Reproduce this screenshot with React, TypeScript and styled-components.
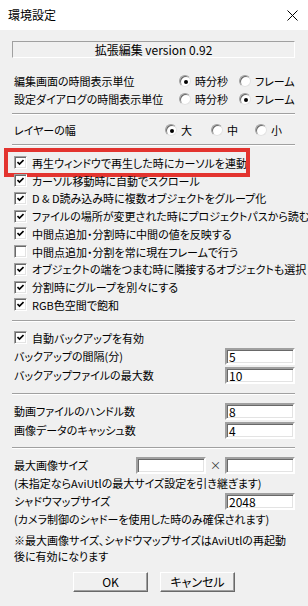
import React from "react";
import styled, { createGlobalStyle } from "styled-components";

const GlobalStyle = createGlobalStyle`
  html, body {
    margin: 0;
    padding: 0;
    background: #f0f0f0;
  }
  body {
    font-family: "Noto Sans CJK JP", "Noto Sans", sans-serif;
    font-size: 11px;
    color: #000;
    font-feature-settings: "palt";
  }
`;

const Window = styled.div`
  width: 308px;
  height: 606px;
  background: #f0f0f0;
  display: flex;
  flex-direction: column;
  overflow: hidden;
`;

const TitleBar = styled.div`
  height: 30px;
  background: #fff;
  display: flex;
  align-items: center;
  justify-content: space-between;
  padding: 0 10px 0 8px;
  flex-shrink: 0;
`;

const Title = styled.span`
  font-size: 12px;
  line-height: 30px;
`;

const Content = styled.div`
  padding: 0 13px 0 12px;
  display: flex;
  flex-direction: column;
`;

const VersionBox = styled.div`
  margin-top: 11px;
  height: 15px;
  border: 1px solid;
  border-color: #a0a0a0 #fff #fff #a0a0a0;
  display: flex;
  align-items: center;
  justify-content: center;
  font-size: 12px;
  line-height: 15px;
`;

const Separator = styled.div<{ $mt: number }>`
  margin-top: ${(p) => p.$mt}px;
  height: 0;
  border-top: 1px solid #a0a0a0;
  border-bottom: 1px solid #fff;
`;

const Row = styled.div<{ $h: number; $mt?: number }>`
  height: ${(p) => p.$h}px;
  margin-top: ${(p) => p.$mt ?? 0}px;
  display: flex;
  align-items: center;
  white-space: nowrap;
`;

const Label = styled.span<{ $w?: number }>`
  width: ${(p) => (p.$w ? `${p.$w}px` : "auto")};
  flex: ${(p) => (p.$w ? "none" : "1")};
  line-height: 14px;
  padding-left: 2px;
`;

const RadioItem = styled.label<{ $w?: number }>`
  width: ${(p) => (p.$w ? `${p.$w}px` : "auto")};
  display: flex;
  align-items: center;
  gap: 4px;
`;

const RadioCircle = styled.span<{ $on?: boolean }>`
  width: 10px;
  height: 10px;
  border-radius: 50%;
  background: #fff;
  border: 1px solid;
  border-color: #a0a0a0 #e3e3e3 #e3e3e3 #a0a0a0;
  box-shadow: inset 1px 1px 0 #696969;
  display: flex;
  align-items: center;
  justify-content: center;
  flex: none;

  &::after {
    content: "";
    width: 4px;
    height: 4px;
    border-radius: 50%;
    background: ${(p) => (p.$on ? "#000" : "transparent")};
    margin: 1px 0 0 1px;
  }
`;

const CheckList = styled.div<{ $mt: number }>`
  margin-top: ${(p) => p.$mt}px;
  display: flex;
  flex-direction: column;
`;

const CheckRow = styled.label<{ $h?: number }>`
  position: relative;
  height: ${(p) => p.$h ?? 17.75}px;
  display: flex;
  align-items: center;
  gap: 5px;
  padding-left: 2px;
  white-space: nowrap;
`;

const CheckBox = styled.span`
  width: 11px;
  height: 11px;
  background: #fff;
  border: 1px solid;
  border-color: #a0a0a0 #fff #fff #a0a0a0;
  box-shadow: inset 1px 1px 0 #696969, inset -1px -1px 0 #e3e3e3;
  display: flex;
  align-items: center;
  justify-content: center;
  flex: none;
`;

const Highlight = styled.span`
  position: absolute;
  left: -8px;
  top: -6px;
  width: 238px;
  height: 21px;
  border: 4px solid #e3342f;
  pointer-events: none;
`;

const TextBox = styled.div<{ $w?: number }>`
  width: ${(p) => p.$w ?? 64}px;
  height: 13px;
  background: #fff;
  border: 2px solid;
  border-color: #a0a0a0 #fff #fff #a0a0a0;
  box-shadow: inset 1px 1px 0 #696969, inset -1px -1px 0 #e3e3e3;
  padding-left: 2px;
  display: flex;
  align-items: center;
  font-size: 12px;
  line-height: 13px;
  flex: none;
`;

const Times = styled.span`
  width: 19px;
  text-align: center;
  color: #333;
`;

const Note = styled.div<{ $lh: number; $mt?: number }>`
  margin-top: ${(p) => p.$mt ?? 0}px;
  height: ${(p) => p.$lh}px;
  line-height: ${(p) => p.$lh}px;
  padding-left: 2px;
  white-space: nowrap;
`;

const ButtonBar = styled.div`
  margin-top: 8px;
  display: flex;
  gap: 12px;
  padding-left: 61px;
`;

const Button = styled.button`
  width: 75px;
  height: 20px;
  background: #f0f0f0;
  border: 1px solid;
  border-color: #fff #696969 #696969 #fff;
  box-shadow: inset -1px -1px 0 #a0a0a0;
  font-family: inherit;
  font-size: 12px;
  color: #000;
  padding: 0;
  font-feature-settings: "palt";
`;

function CloseIcon() {
  return (
    <svg width="11" height="11" viewBox="0 0 11 11">
      <path d="M0.5 0.5 L10.5 10.5 M10.5 0.5 L0.5 10.5" stroke="#000" strokeWidth="1" fill="none" />
    </svg>
  );
}

function CheckMark() {
  return (
    <svg width="7" height="7" viewBox="0 0 7 7">
      <path d="M0.5 3 L2.5 5 L6.5 1" stroke="#000" strokeWidth="1.6" fill="none" />
    </svg>
  );
}

function Radio({ on, label, w }: { on?: boolean; label: string; w?: number }) {
  return (
    <RadioItem $w={w}>
      <RadioCircle $on={on} />
      <span>{label}</span>
    </RadioItem>
  );
}

function Check({ on, label, highlight, h }: { on: boolean; label: string; highlight?: boolean; h?: number }) {
  return (
    <CheckRow $h={h}>
      <CheckBox>{on && <CheckMark />}</CheckBox>
      <span>{label}</span>
      {highlight && <Highlight />}
    </CheckRow>
  );
}

const checks: { on: boolean; label: string }[] = [
  { on: true, label: "カーソル移動時に自動でスクロール" },
  { on: true, label: "D & D読み込み時に複数オブジェクトをグループ化" },
  { on: true, label: "ファイルの場所が変更された時にプロジェクトパスから読む" },
  { on: true, label: "中間点追加・分割時に中間の値を反映する" },
  { on: false, label: "中間点追加・分割を常に現在フレームで行う" },
  { on: true, label: "オブジェクトの端をつまむ時に隣接するオブジェクトも選択" },
  { on: true, label: "分割時にグループを別々にする" },
  { on: true, label: "RGB色空間で飽和" },
];

export default function App() {
  return (
    <Window>
      <GlobalStyle />
      <TitleBar>
        <Title>環境設定</Title>
        <CloseIcon />
      </TitleBar>
      <Content>
        <VersionBox>拡張編集 version 0.92</VersionBox>

        <Row $h={18} $mt={14}>
          <Label $w={165}>編集画面の時間表示単位</Label>
          <Radio on label="時分秒" w={60} />
          <Radio label="フレーム" />
        </Row>
        <Row $h={18}>
          <Label $w={165}>設定ダイアログの時間表示単位</Label>
          <Radio label="時分秒" w={60} />
          <Radio on label="フレーム" />
        </Row>

        <Separator $mt={5} />

        <Row $h={18} $mt={6}>
          <Label $w={151}>レイヤーの幅</Label>
          <Radio on label="大" w={46} />
          <Radio label="中" w={44} />
          <Radio label="小" />
        </Row>

        <Separator $mt={5} />

        <CheckList $mt={8}>
          <Check on label="再生ウィンドウで再生した時にカーソルを連動" highlight />
          {checks.map((c) => (
            <Check key={c.label} on={c.on} label={c.label} />
          ))}
        </CheckList>

        <Separator $mt={6} />

        <CheckList $mt={7}>
          <Check on label="自動バックアップを有効" h={18} />
        </CheckList>
        <Row $h={19}>
          <Label>バックアップの間隔(分)</Label>
          <TextBox>5</TextBox>
        </Row>
        <Row $h={19}>
          <Label>バックアップファイルの最大数</Label>
          <TextBox>10</TextBox>
        </Row>

        <Separator $mt={8} />

        <Row $h={19} $mt={7}>
          <Label>動画ファイルのハンドル数</Label>
          <TextBox>8</TextBox>
        </Row>
        <Row $h={19}>
          <Label>画像データのキャッシュ数</Label>
          <TextBox>4</TextBox>
        </Row>

        <Separator $mt={7} />

        <Row $h={19} $mt={7}>
          <Label>最大画像サイズ</Label>
          <TextBox />
          <Times>×</Times>
          <TextBox />
        </Row>
        <Note $lh={16}>(未指定ならAviUtlの最大サイズ設定を引き継ぎます)</Note>
        <Row $h={19} $mt={1}>
          <Label>シャドウマップサイズ</Label>
          <TextBox>2048</TextBox>
        </Row>
        <Note $lh={16}>(カメラ制御のシャドーを使用した時のみ確保されます)</Note>

        <Note $lh={16} $mt={5}>※最大画像サイズ、シャドウマップサイズはAviUtlの再起動</Note>
        <Note $lh={16}>後に有効になります</Note>

        <ButtonBar>
          <Button>OK</Button>
          <Button>キャンセル</Button>
        </ButtonBar>
      </Content>
    </Window>
  );
}
